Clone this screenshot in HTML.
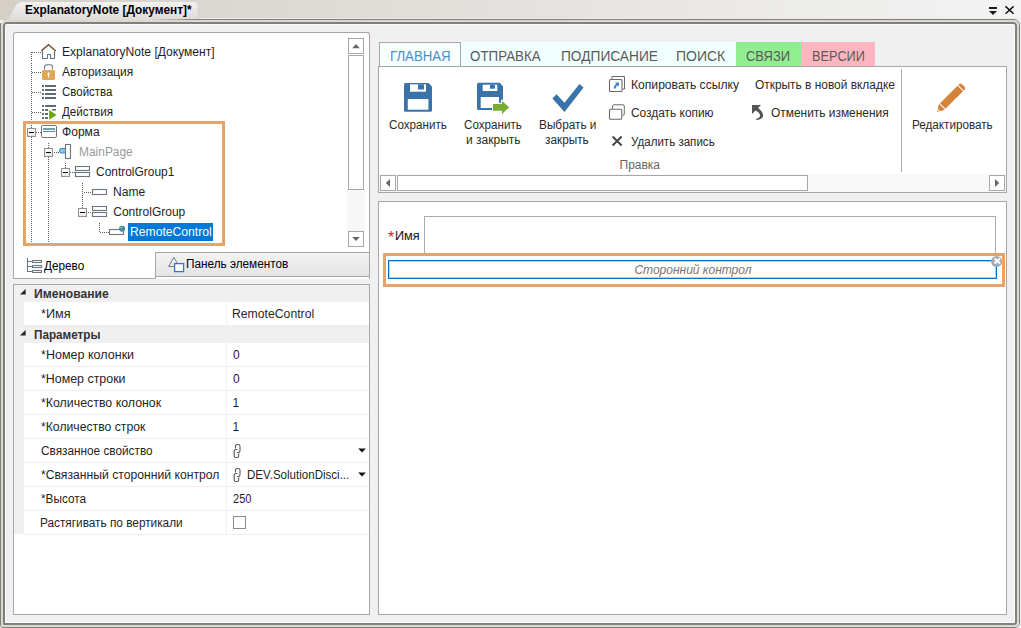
<!DOCTYPE html>
<html><head><meta charset="utf-8"><title>ExplanatoryNote</title>
<style>
html,body{margin:0;padding:0;}
body{width:1021px;height:628px;overflow:hidden;background:#f0f0f0;font-family:"Liberation Sans",sans-serif;position:relative;}
#r{position:absolute;left:0;top:0;width:1021px;height:628px;overflow:hidden;}
#r div,#r svg{position:absolute;}
#r .t{height:20px;line-height:20px;white-space:pre;}
</style></head><body><div id="r">
<div style="left:0px;top:0px;width:1021px;height:20px;background:linear-gradient(90deg,#d4d0c8 0,#dad7d0 200px,#e4e2de 520px,#f3f3f3 1000px)"></div><div style="left:0px;top:0px;width:210px;height:22px;background:linear-gradient(#f4f4f4 0,#e9e8e6 45%,#dcd9d2 100%);clip-path:path('M3 22 C9 20 12 12 15 7 C17.5 3 19.5 2 23 2 L194 2 Q197.5 2 197.5 5.5 L197.5 22 Z')"></div><div class="t" style="left:25.31px;top:0px;font-size:12px;transform:scaleX(0.9878);transform-origin:0 0;font-weight:bold;color:#000">ExplanatoryNote [Документ]*</div><div style="left:198px;top:18px;width:822px;height:1px;background:#ecebe8"></div><div style="left:0px;top:19px;width:1020px;height:609px;box-sizing:border-box;border:1px solid #808080;border-radius:6px 6px 5px 3px;clip-path:polygon(198px 0,100% 0,100% 100%,0 100%,0 4px,0 4px)"></div><div style="left:0px;top:19px;width:1020px;height:609px;box-sizing:border-box;border:1px solid #808080;border-radius:6px;clip-path:polygon(0 4px,1px 4px,1px 100%,0 100%)"></div><div style="left:1px;top:20px;width:1018px;height:607px;box-sizing:border-box;border:2px solid #dcd8d0;border-radius:5px 5px 4px 2px"></div><div style="left:3px;top:22px;width:1014px;height:603px;box-sizing:border-box;border:2px solid #808080;border-radius:4px 4px 3px 1px;background:#f0f0f0"></div><div style="left:5px;top:24px;width:1010px;height:599px;box-sizing:border-box;border:1px solid #fbfbfb;border-radius:2px"></div><svg style="left:985px;top:5px" width="32" height="12" viewBox="0 0 32 12"><path d="M4 2h8v2H4z M4 6h8L8 9.9z" fill="#1a1a1a"/><path d="M20.5 1.4L28.6 8.8 M28.6 1.4L20.5 8.8" stroke="#111" stroke-width="1.45" fill="none"/></svg><div style="left:13px;top:32px;width:357px;height:247px;box-sizing:border-box;border:1px solid #a7a7a7;border-bottom:none;border-radius:3px 3px 0 0;background:#fff"></div><div style="left:347px;top:190px;width:18px;height:41px;background:#f7f7f7"></div><div style="left:348px;top:38px;width:16px;height:16px;box-sizing:border-box;border:1px solid #a7a7a7;background:#fff"></div><div style="left:348px;top:55px;width:16px;height:135px;box-sizing:border-box;border:1px solid #a7a7a7;background:#fff"></div><div style="left:348px;top:231px;width:16px;height:16px;box-sizing:border-box;border:1px solid #a7a7a7;background:#fff"></div><svg style="left:348px;top:38px" width="16" height="16"><path d="M4.2 10.2L8 6l3.8 4.2z" fill="#666"/></svg><svg style="left:348px;top:231px" width="16" height="16"><path d="M4.2 6.1L8 10l3.8-3.9z" fill="#666"/></svg><div style="left:31px;top:52px;width:1px;height:1px;background:#5a5a5a"></div><div style="left:31px;top:52px;width:1px;height:10px;background-image:linear-gradient(#5a5a5a 50%,transparent 50%);background-size:1px 2px;background-position:0 0px"></div><div style="left:31px;top:62px;width:1px;height:59px;background-image:linear-gradient(#5a5a5a 50%,transparent 50%);background-size:1px 2px;background-position:0 1px"></div><div style="left:31px;top:124px;width:1px;height:4px;background-image:linear-gradient(#5a5a5a 50%,transparent 50%);background-size:1px 2px;background-position:0 1px"></div><div style="left:31px;top:137px;width:1px;height:106px;background-image:linear-gradient(#5a5a5a 50%,transparent 50%);background-size:1px 2px;background-position:0 0px"></div><div style="left:32px;top:52px;width:9px;height:1px;background-image:linear-gradient(90deg,#5a5a5a 50%,transparent 50%);background-size:2px 1px;background-position:0px 0"></div><div style="left:32px;top:72px;width:9px;height:1px;background-image:linear-gradient(90deg,#5a5a5a 50%,transparent 50%);background-size:2px 1px;background-position:0px 0"></div><div style="left:32px;top:92px;width:9px;height:1px;background-image:linear-gradient(90deg,#5a5a5a 50%,transparent 50%);background-size:2px 1px;background-position:0px 0"></div><div style="left:32px;top:112px;width:9px;height:1px;background-image:linear-gradient(90deg,#5a5a5a 50%,transparent 50%);background-size:2px 1px;background-position:0px 0"></div><div style="left:36px;top:132px;width:5px;height:1px;background-image:linear-gradient(90deg,#5a5a5a 50%,transparent 50%);background-size:2px 1px;background-position:0px 0"></div><div style="left:48px;top:143px;width:1px;height:5px;background-image:linear-gradient(#5a5a5a 50%,transparent 50%);background-size:1px 2px;background-position:0 0px"></div><div style="left:48px;top:157px;width:1px;height:86px;background-image:linear-gradient(#5a5a5a 50%,transparent 50%);background-size:1px 2px;background-position:0 0px"></div><div style="left:53px;top:152px;width:6px;height:1px;background-image:linear-gradient(90deg,#5a5a5a 50%,transparent 50%);background-size:2px 1px;background-position:1px 0"></div><div style="left:65px;top:163px;width:1px;height:5px;background-image:linear-gradient(#5a5a5a 50%,transparent 50%);background-size:1px 2px;background-position:0 0px"></div><div style="left:70px;top:172px;width:5px;height:1px;background-image:linear-gradient(90deg,#5a5a5a 50%,transparent 50%);background-size:2px 1px;background-position:0px 0"></div><div style="left:82px;top:183px;width:1px;height:25px;background-image:linear-gradient(#5a5a5a 50%,transparent 50%);background-size:1px 2px;background-position:0 0px"></div><div style="left:83px;top:192px;width:9px;height:1px;background-image:linear-gradient(90deg,#5a5a5a 50%,transparent 50%);background-size:2px 1px;background-position:1px 0"></div><div style="left:87px;top:212px;width:5px;height:1px;background-image:linear-gradient(90deg,#5a5a5a 50%,transparent 50%);background-size:2px 1px;background-position:1px 0"></div><div style="left:99px;top:223px;width:1px;height:9px;background-image:linear-gradient(#5a5a5a 50%,transparent 50%);background-size:1px 2px;background-position:0 0px"></div><div style="left:100px;top:232px;width:9px;height:1px;background-image:linear-gradient(90deg,#5a5a5a 50%,transparent 50%);background-size:2px 1px;background-position:0px 0"></div><div style="left:27px;top:128px;width:9px;height:9px;box-sizing:border-box;border:1px solid #919191;background:linear-gradient(#fff,#e8e8e8)"></div><div style="left:29px;top:132px;width:5px;height:1px;background:#000"></div><div style="left:44px;top:148px;width:9px;height:9px;box-sizing:border-box;border:1px solid #919191;background:linear-gradient(#fff,#e8e8e8)"></div><div style="left:46px;top:152px;width:5px;height:1px;background:#000"></div><div style="left:61px;top:168px;width:9px;height:9px;box-sizing:border-box;border:1px solid #919191;background:linear-gradient(#fff,#e8e8e8)"></div><div style="left:63px;top:172px;width:5px;height:1px;background:#000"></div><div style="left:78px;top:208px;width:9px;height:9px;box-sizing:border-box;border:1px solid #919191;background:linear-gradient(#fff,#e8e8e8)"></div><div style="left:80px;top:212px;width:5px;height:1px;background:#000"></div><div style="left:128px;top:223px;width:85px;height:18px;background:#0078d7"></div><div style="left:23px;top:121px;width:202px;height:125px;box-sizing:border-box;border:3px solid #e9a366"></div><div class="t" style="left:61.70px;top:42px;font-size:12px;transform:scaleX(1.0040);transform-origin:0 0;color:#1e1e1e">ExplanatoryNote [Документ]</div><div class="t" style="left:62.17px;top:62px;font-size:12px;transform:scaleX(0.9920);transform-origin:0 0;color:#1e1e1e">Авторизация</div><div class="t" style="left:62.16px;top:82px;font-size:12px;transform:scaleX(0.9576);transform-origin:0 0;color:#1e1e1e">Свойства</div><div class="t" style="left:62.30px;top:102px;font-size:12px;transform:scaleX(0.9687);transform-origin:0 0;color:#1e1e1e">Действия</div><div class="t" style="left:62.06px;top:122px;font-size:12px;transform:scaleX(1.0054);transform-origin:0 0;color:#1e1e1e">Форма</div><div class="t" style="left:78.81px;top:142px;font-size:12px;transform:scaleX(0.9950);transform-origin:0 0;color:#9a9a9a">MainPage</div><div class="t" style="left:95.94px;top:162px;font-size:12px;transform:scaleX(0.9955);transform-origin:0 0;color:#1e1e1e">ControlGroup1</div><div class="t" style="left:112.89px;top:182px;font-size:12px;transform:scaleX(1.0077);transform-origin:0 0;color:#1e1e1e">Name</div><div class="t" style="left:113.23px;top:202px;font-size:12px;color:#1e1e1e">ControlGroup</div><div class="t" style="left:129.89px;top:222px;font-size:12px;transform:scaleX(1.0118);transform-origin:0 0;color:#fff">RemoteControl</div><div style="left:13px;top:278px;width:143px;height:1px;background:#a7a7a7"></div><div style="left:155px;top:276px;width:1px;height:3px;background:#a7a7a7"></div><div style="left:155px;top:252px;width:215px;height:25px;box-sizing:border-box;border:1px solid #a7a7a7;background:linear-gradient(#f3f3f3,#e4e4e4)"></div><div class="t" style="left:44.00px;top:256px;font-size:12px;transform:scaleX(0.9788);transform-origin:0 0;color:#000">Дерево</div><div class="t" style="left:186.02px;top:254px;font-size:12px;transform:scaleX(0.9813);transform-origin:0 0;color:#000">Панель элементов</div><div style="left:13px;top:284px;width:357px;height:331px;box-sizing:border-box;border:1px solid #a7a7a7;background:#fff"></div><div style="left:14px;top:285px;width:10px;height:249px;background:#f0f0f0"></div><div style="left:14px;top:285px;width:355px;height:17px;background:#f0f0f0"></div><div style="left:14px;top:325px;width:355px;height:18px;background:#f0f0f0"></div><div style="left:226px;top:302px;width:1px;height:23px;background:#f0f0f0"></div><div style="left:24px;top:366px;width:345px;height:1px;background:#efefef"></div><div style="left:24px;top:390px;width:345px;height:1px;background:#efefef"></div><div style="left:24px;top:414px;width:345px;height:1px;background:#efefef"></div><div style="left:24px;top:438px;width:345px;height:1px;background:#efefef"></div><div style="left:24px;top:462px;width:345px;height:1px;background:#efefef"></div><div style="left:24px;top:486px;width:345px;height:1px;background:#efefef"></div><div style="left:24px;top:510px;width:345px;height:1px;background:#efefef"></div><div style="left:24px;top:534px;width:345px;height:1px;background:#efefef"></div><div style="left:226px;top:343px;width:1px;height:191px;background:#efefef"></div><svg style="left:19px;top:288px" width="8" height="8"><path d="M1 6.6h5.6v-5.6z" fill="#222"/></svg><svg style="left:19px;top:329px" width="8" height="8"><path d="M1 6.6h5.6v-5.6z" fill="#222"/></svg><div class="t" style="left:33.99px;top:284px;font-size:12px;transform:scaleX(1.0099);transform-origin:0 0;font-weight:bold;color:#333">Именование</div><div class="t" style="left:34.02px;top:325px;font-size:12px;transform:scaleX(0.9758);transform-origin:0 0;font-weight:bold;color:#333">Параметры</div><div class="t" style="left:40.84px;top:304px;font-size:12px;transform:scaleX(1.0579);transform-origin:0 0;color:#1f1f1f">*Имя</div><div class="t" style="left:232.48px;top:304px;font-size:12px;transform:scaleX(1.0181);transform-origin:0 0;color:#1f1f1f">RemoteControl</div><div class="t" style="left:40.85px;top:345px;font-size:12px;transform:scaleX(1.0449);transform-origin:0 0;color:#1f1f1f">*Номер колонки</div><div class="t" style="left:233.09px;top:345px;font-size:12px;color:#1f1f1f">0</div><div class="t" style="left:40.85px;top:369px;font-size:12px;transform:scaleX(1.0339);transform-origin:0 0;color:#1f1f1f">*Номер строки</div><div class="t" style="left:233.09px;top:369px;font-size:12px;color:#1f1f1f">0</div><div class="t" style="left:40.85px;top:393px;font-size:12px;transform:scaleX(1.0305);transform-origin:0 0;color:#1f1f1f">*Количество колонок</div><div class="t" style="left:232.50px;top:393px;font-size:12px;color:#1f1f1f">1</div><div class="t" style="left:40.86px;top:417px;font-size:12px;transform:scaleX(1.0180);transform-origin:0 0;color:#1f1f1f">*Количество строк</div><div class="t" style="left:232.50px;top:417px;font-size:12px;color:#1f1f1f">1</div><div class="t" style="left:40.84px;top:441px;font-size:12px;transform:scaleX(0.9828);transform-origin:0 0;color:#1f1f1f">Связанное свойство</div><div class="t" style="left:40.86px;top:465px;font-size:12px;transform:scaleX(1.0145);transform-origin:0 0;color:#1f1f1f">*Связанный сторонний контрол</div><div class="t" style="left:40.88px;top:489px;font-size:12px;transform:scaleX(0.9806);transform-origin:0 0;color:#1f1f1f">*Высота</div><div class="t" style="left:232.99px;top:489px;font-size:12px;transform:scaleX(0.9229);transform-origin:0 0;color:#1f1f1f">250</div><div class="t" style="left:40.42px;top:513px;font-size:12px;transform:scaleX(0.9838);transform-origin:0 0;color:#1f1f1f">Растягивать по вертикали</div><div class="t" style="left:246.64px;top:464.5px;font-size:12px;transform:scaleX(0.9624);transform-origin:0 0;color:#1f1f1f">DEV.SolutionDisci...</div><svg style="left:357px;top:447px" width="10" height="7"><path d="M1.2 1.4h7.6L5 5.4z" fill="#111"/></svg><svg style="left:357px;top:471px" width="10" height="7"><path d="M1.2 1.4h7.6L5 5.4z" fill="#111"/></svg><div style="left:233px;top:516px;width:13px;height:13px;box-sizing:border-box;border:1px solid #8a8a8a;background:#fff"></div><div style="left:461px;top:42px;width:275px;height:24px;background:#f0ffff"></div><div style="left:736px;top:42px;width:65px;height:24px;background:#90ee90"></div><div style="left:801px;top:42px;width:74px;height:24px;background:#ffb6c1"></div><div style="left:378px;top:66px;width:629px;height:127px;box-sizing:border-box;border:1px solid #a7a7a7;background:#fff"></div><div style="left:379px;top:42px;width:82px;height:24px;box-sizing:border-box;border:1px solid #a7a7a7;border-bottom:none;background:#f8ffff"></div><div class="t" style="left:390.02px;top:46px;font-size:14px;transform:scaleX(0.9442);transform-origin:0 0;color:#4d8ccb">ГЛАВНАЯ</div><div class="t" style="left:470.42px;top:46px;font-size:14px;transform:scaleX(0.9538);transform-origin:0 0;color:#5a5a5a">ОТПРАВКА</div><div class="t" style="left:561.01px;top:46px;font-size:14px;transform:scaleX(0.9803);transform-origin:0 0;color:#5a5a5a">ПОДПИСАНИЕ</div><div class="t" style="left:675.99px;top:46px;font-size:14px;color:#5a5a5a">ПОИСК</div><div class="t" style="left:746.38px;top:46px;font-size:14px;transform:scaleX(0.9246);transform-origin:0 0;color:#5a5a5a">СВЯЗИ</div><div class="t" style="left:812.05px;top:46px;font-size:14px;transform:scaleX(0.9114);transform-origin:0 0;color:#5a5a5a">ВЕРСИИ</div><div class="t" style="left:389.25px;top:115px;font-size:12px;transform:scaleX(0.9703);transform-origin:0 0;color:#2a2a2a">Сохранить</div><div class="t" style="left:464.25px;top:115px;font-size:12px;transform:scaleX(0.9703);transform-origin:0 0;color:#2a2a2a">Сохранить</div><div class="t" style="left:466.00px;top:130px;font-size:12px;color:#2a2a2a">и закрыть</div><div class="t" style="left:538.52px;top:115px;font-size:12px;transform:scaleX(0.9846);transform-origin:0 0;color:#2a2a2a">Выбрать и</div><div class="t" style="left:545.04px;top:130px;font-size:12px;transform:scaleX(0.9832);transform-origin:0 0;color:#2a2a2a">закрыть</div><div class="t" style="left:630.89px;top:75px;font-size:12px;transform:scaleX(1.0100);transform-origin:0 0;color:#2a2a2a">Копировать ссылку</div><div class="t" style="left:754.80px;top:75px;font-size:12px;transform:scaleX(0.9924);transform-origin:0 0;color:#2a2a2a">Открыть в новой вкладке</div><div class="t" style="left:631.34px;top:103px;font-size:12px;transform:scaleX(0.9920);transform-origin:0 0;color:#2a2a2a">Создать копию</div><div class="t" style="left:770.70px;top:103px;font-size:12px;transform:scaleX(0.9930);transform-origin:0 0;color:#2a2a2a">Отменить изменения</div><div class="t" style="left:631.39px;top:132px;font-size:12px;transform:scaleX(0.9641);transform-origin:0 0;color:#2a2a2a">Удалить запись</div><div class="t" style="left:619.50px;top:155px;font-size:12px;color:#666">Правка</div><div class="t" style="left:911.53px;top:115px;font-size:12px;transform:scaleX(0.9737);transform-origin:0 0;color:#2a2a2a">Редактировать</div><div style="left:901px;top:69px;width:1px;height:103px;background:#ababab"></div><div style="left:379px;top:174px;width:627px;height:18px;background:#f8f8f8"></div><div style="left:380px;top:175px;width:16px;height:16px;box-sizing:border-box;border:1px solid #a7a7a7;background:#fff"></div><div style="left:397px;top:175px;width:411px;height:16px;box-sizing:border-box;border:1px solid #a7a7a7;background:#fff"></div><div style="left:989px;top:175px;width:16px;height:16px;box-sizing:border-box;border:1px solid #a7a7a7;background:#fff"></div><svg style="left:380px;top:175px" width="16" height="16"><path d="M10 4v8L5.8 8z" fill="#666"/></svg><svg style="left:989px;top:175px" width="16" height="16"><path d="M6 4v8L10.2 8z" fill="#666"/></svg><div style="left:378px;top:201px;width:629px;height:414px;box-sizing:border-box;border:1px solid #a7a7a7;background:#fff"></div><div style="left:424px;top:216px;width:572px;height:44px;box-sizing:border-box;border:1px solid #ababab;background:#fff"></div><div class="t" style="left:387.95px;top:227.5px;font-size:16px;color:#d8202a">*</div><div class="t" style="left:394.83px;top:226px;font-size:13px;transform:scaleX(0.9744);transform-origin:0 0;color:#111">Имя</div><div style="left:383px;top:253px;width:622px;height:34px;box-sizing:border-box;border:3px solid #e9a366;background:#fff"></div><div style="left:388px;top:260px;width:609px;height:19px;box-sizing:border-box;border:1px solid #0b70c4;box-shadow:inset 0 0 0 1px rgba(120,130,150,.42);background:#fff"></div><div class="t" style="left:634.39px;top:260px;font-size:12px;font-style:italic;color:#747474">Сторонний контрол</div><svg style="left:991px;top:254px" width="13" height="14" viewBox="0 0 13 14"><circle cx="5.6" cy="7.5" r="5.5" fill="#a9a9a9"/><path d="M3.5 4.4L9.1 9.6M9.1 4.4L3.5 9.6" stroke="#fff" stroke-width="2"/></svg><svg style="left:40px;top:42px" width="18" height="19" viewBox="40 42 18 19" ><path d="M42.5 51V58.5H47.5V54.5H50.5V58.5H54.5V51" fill="none" stroke="#6a7681" stroke-width="1.1"/><path d="M41.3 50.9L48.5 44.6L55.8 51" fill="none" stroke="#6e552f" stroke-width="1.4"/></svg><svg style="left:40px;top:62px" width="18" height="19" viewBox="40 62 18 19" ><path d="M44.6 69.5V66.8Q44.6 64.7 46.8 64.7H50.2Q52.4 64.7 52.4 66.8V69.5" fill="none" stroke="#6a7681" stroke-width="1.1"/><rect x="42" y="70" width="13" height="10" rx="1.6" fill="#e2a552"/><path d="M48.5 72.6a1.1 1.1 0 0 1 .6 2.05V77.6h-1.2V74.65a1.1 1.1 0 0 1 .6-2.05z" fill="#fff"/></svg><svg style="left:40px;top:83px" width="18" height="18" viewBox="40 83 18 18" ><g fill="#5f6b75"><rect x="42" y="85" width="2" height="2"/><rect x="45" y="85" width="11" height="2"/><rect x="42" y="89" width="2" height="2"/><rect x="45" y="89" width="11" height="2"/><rect x="42" y="93" width="2" height="2"/><rect x="45" y="93" width="11" height="2"/><rect x="42" y="97" width="2" height="2"/><rect x="45" y="97" width="11" height="2"/></g></svg><svg style="left:40px;top:103px" width="18" height="18" viewBox="40 103 18 18" ><g fill="#5f6b75"><rect x="42" y="105" width="2" height="2"/><rect x="45" y="105" width="11" height="2"/><rect x="42" y="109" width="2" height="2"/><rect x="45" y="109" width="3" height="2"/><rect x="42" y="113" width="2" height="2"/><rect x="45" y="113" width="3" height="2"/><rect x="42" y="117" width="2" height="2"/><rect x="45" y="117" width="3" height="2"/><rect x="52" y="109" width="4" height="1.6"/></g><path d="M49.2 110L56.5 114.9L49.2 119.8z" fill="#68a611"/></svg><svg style="left:40px;top:124px" width="18" height="15" viewBox="40 124 18 15" ><rect x="41.5" y="125.5" width="15" height="12" rx="1.3" fill="#fff" stroke="#727272" stroke-width="1"/><rect x="43" y="128" width="12" height="2" fill="#6b9fb3"/><rect x="43" y="131" width="12" height="1" fill="#5f819c"/></svg><svg style="left:58px;top:143px" width="14" height="17" viewBox="58 143 14 17" ><path d="M65.5 148.5H61.2Q59.5 148.5 59.5 150.2V151.3Q59.5 153 61.2 153H65.5z" fill="#8cc3ec" stroke="#3f86c6" stroke-width="1"/><rect x="65.5" y="144.5" width="5" height="14" fill="#fff" stroke="#6a7681" stroke-width="1.1"/></svg><svg style="left:74px;top:165px" width="18" height="13" viewBox="74 165 18 13" ><rect x="75.5" y="166.5" width="14" height="4" fill="#fff" stroke="#6a7681" stroke-width="1.1"/><rect x="75.5" y="172.5" width="14" height="4" fill="#fff" stroke="#6a7681" stroke-width="1.1"/></svg><svg style="left:91px;top:205px" width="18" height="13" viewBox="91 205 18 13" ><rect x="92.5" y="206.5" width="14" height="4" fill="#fff" stroke="#6a7681" stroke-width="1.1"/><rect x="92.5" y="212.5" width="14" height="4" fill="#fff" stroke="#6a7681" stroke-width="1.1"/></svg><svg style="left:91px;top:188px" width="18" height="9" viewBox="91 188 18 9" ><rect x="92.5" y="189.5" width="14" height="5" fill="#fff" stroke="#6a7681" stroke-width="1.1"/></svg><svg style="left:108px;top:224px" width="19" height="13" viewBox="108 224 19 13" ><rect x="109.5" y="229.5" width="14" height="5" fill="#fff" stroke="#6a7681" stroke-width="1.1"/><circle cx="122.1" cy="228.8" r="3" fill="#4b7fd6"/><path d="M120.2 227.2q1.2-1.6 2.6-1.2q-.2 1.3-1.2 1.6q-.2 1.6-1 2.6q-1-1.4-.4-3z M123.2 228.4q1.2-.4 1.6.4q-.4 1.8-1.8 2.6q-.6-1.4.2-3z" fill="#3fa33a"/><circle cx="121.3" cy="227.6" r="0.8" fill="#cfe6ff" opacity=".8"/></svg><svg style="left:26px;top:257px" width="18" height="18" viewBox="26 257 18 18" ><path d="M27.5 258V271.5H32 M27.5 261.5H32 M27.5 266.5H32" fill="none" stroke="#6b7680" stroke-width="1.1"/><g fill="#fff" stroke="#6b7680" stroke-width="1.1"><rect x="32.5" y="260.5" width="9" height="2"/><rect x="32.5" y="265.5" width="9" height="2"/><rect x="32.5" y="270.5" width="9" height="2"/></g></svg><svg style="left:167px;top:255px" width="19" height="19" viewBox="167 255 19 19" ><path d="M174 266.5H168.6L173.8 257.3L177.2 263" fill="none" stroke="#7a7a7a" stroke-width="1"/><rect x="174.6" y="263.6" width="9" height="8" fill="#fff" stroke="#3877b7" stroke-width="1.3"/></svg><svg style="left:232px;top:443px" width="11" height="17" viewBox="232 443 11 17" ><g transform="translate(0,0)" fill="none" stroke="#555" stroke-width="1.1"><path d="M235.5 448.6V446.3Q235.5 444.5 237.3 444.5H238.2Q240 444.5 240 446.3V450.7Q240 452.5 238.2 452.5H236.8"/><path d="M238.7 453.4V455.7Q238.7 457.5 236.9 457.5H236Q234.2 457.5 234.2 455.7V451.3Q234.2 449.5 236 449.5H237.4"/></g></svg><svg style="left:232px;top:467px" width="11" height="17" viewBox="232 467 11 17" ><g transform="translate(0,24)" fill="none" stroke="#555" stroke-width="1.1"><path d="M235.5 448.6V446.3Q235.5 444.5 237.3 444.5H238.2Q240 444.5 240 446.3V450.7Q240 452.5 238.2 452.5H236.8"/><path d="M238.7 453.4V455.7Q238.7 457.5 236.9 457.5H236Q234.2 457.5 234.2 455.7V451.3Q234.2 449.5 236 449.5H237.4"/></g></svg><svg style="left:403px;top:82px" width="30" height="31" viewBox="403 82 30 31" ><path d="M405.5 83H428.5L432 86.5V110.3Q432 111.8 430.5 111.8H405.5Q404 111.8 404 110.3V84.5Q404 83 405.5 83z" fill="#3973aa"/><path d="M410 84.3H426V91.7H410z" fill="#fff"/><rect x="418" y="84.3" width="6" height="5.2" fill="#3973aa"/><rect x="407.8" y="99" width="20.6" height="10.7" fill="#fff"/></svg><svg style="left:476px;top:82px" width="35" height="33" viewBox="476 82 35 33" ><path d="M478.5 82.7H499.7L503 86.2V99.7H501V102.7H499V96.9H480.7V108H492V110H478.5Q477 110 477 108.5V84.2Q477 82.7 478.5 82.7z" fill="#3973aa"/><path d="M482.7 84.7H497.3V91H482.7z" fill="#fff"/><rect x="490" y="84.7" width="4.9" height="4" fill="#3973aa"/><path d="M493 104H502V100.9L509.2 107.3L502 114V110.8H493z" fill="#79aa34"/></svg><svg style="left:551px;top:82px" width="34" height="32" viewBox="551 82 34 32" ><path d="M556.5 94.2L564.5 102.7L579.4 83.9L583.6 87.4L564.5 112L552.4 98.4z" fill="#3973aa"/></svg><svg style="left:934px;top:80px" width="34" height="34" viewBox="934 80 34 34" ><g transform="translate(937 111.8) rotate(-45)" fill="#d4843a"><path d="M0 0L1.9 -1.1V1.1z"/><path d="M2.7 -1.5Q5 -3.6 7.1 -3.85V3.85Q5 3.6 2.7 1.5z"/><rect x="8.1" y="-3.85" width="24.8" height="7.7"/><path d="M33.9 -3.85H35.5Q37.1 -3.85 37.1 -2.2V2.2Q37.1 3.85 35.5 3.85H33.9z"/></g></svg><svg style="left:608px;top:75px" width="18" height="18" viewBox="608 75 18 18" ><path d="M612 79V76.5H624.5V89H622.5" fill="none" stroke="#6a6a6a" stroke-width="1"/><rect x="609.5" y="79.5" width="12.5" height="12" rx="1" fill="#fff" stroke="#6a6a6a" stroke-width="1.1"/><path d="M615 82.6H619V86.6L617.6 85.2Q615.8 86.2 616 88.6H613.8Q613.5 85.4 616.3 83.9z" fill="#4285cc"/></svg><svg style="left:608px;top:103px" width="18" height="18" viewBox="608 103 18 18" ><path d="M612.6 109V106Q612.6 104.8 613.8 104.8H623.1Q624.3 104.8 624.3 106V114Q624.3 115.2 623.1 115.2H622.5" fill="none" stroke="#6a6a6a" stroke-width="1"/><rect x="609.5" y="109.3" width="12.3" height="10" rx="1.3" fill="#fff" stroke="#6a6a6a" stroke-width="1.1"/></svg><svg style="left:610px;top:134px" width="14" height="14" viewBox="610 134 14 14" ><path d="M612.6 136.5L621.6 145.5M621.6 136.5L612.6 145.5" stroke="#444" stroke-width="1.9" fill="none"/></svg><svg style="left:750px;top:103px" width="16" height="19" viewBox="750 103 16 19" ><path d="M752 105H761L752 114z" fill="#555"/><path d="M757 106.5L758.6 108.2Q762.6 111.4 763.1 115Q763.5 119.3 756.2 120L756.1 118.7Q760.3 117.8 760.1 115.2Q759.8 112.6 755.3 110.4L753.8 109z" fill="#555"/></svg>
</div></body></html>
